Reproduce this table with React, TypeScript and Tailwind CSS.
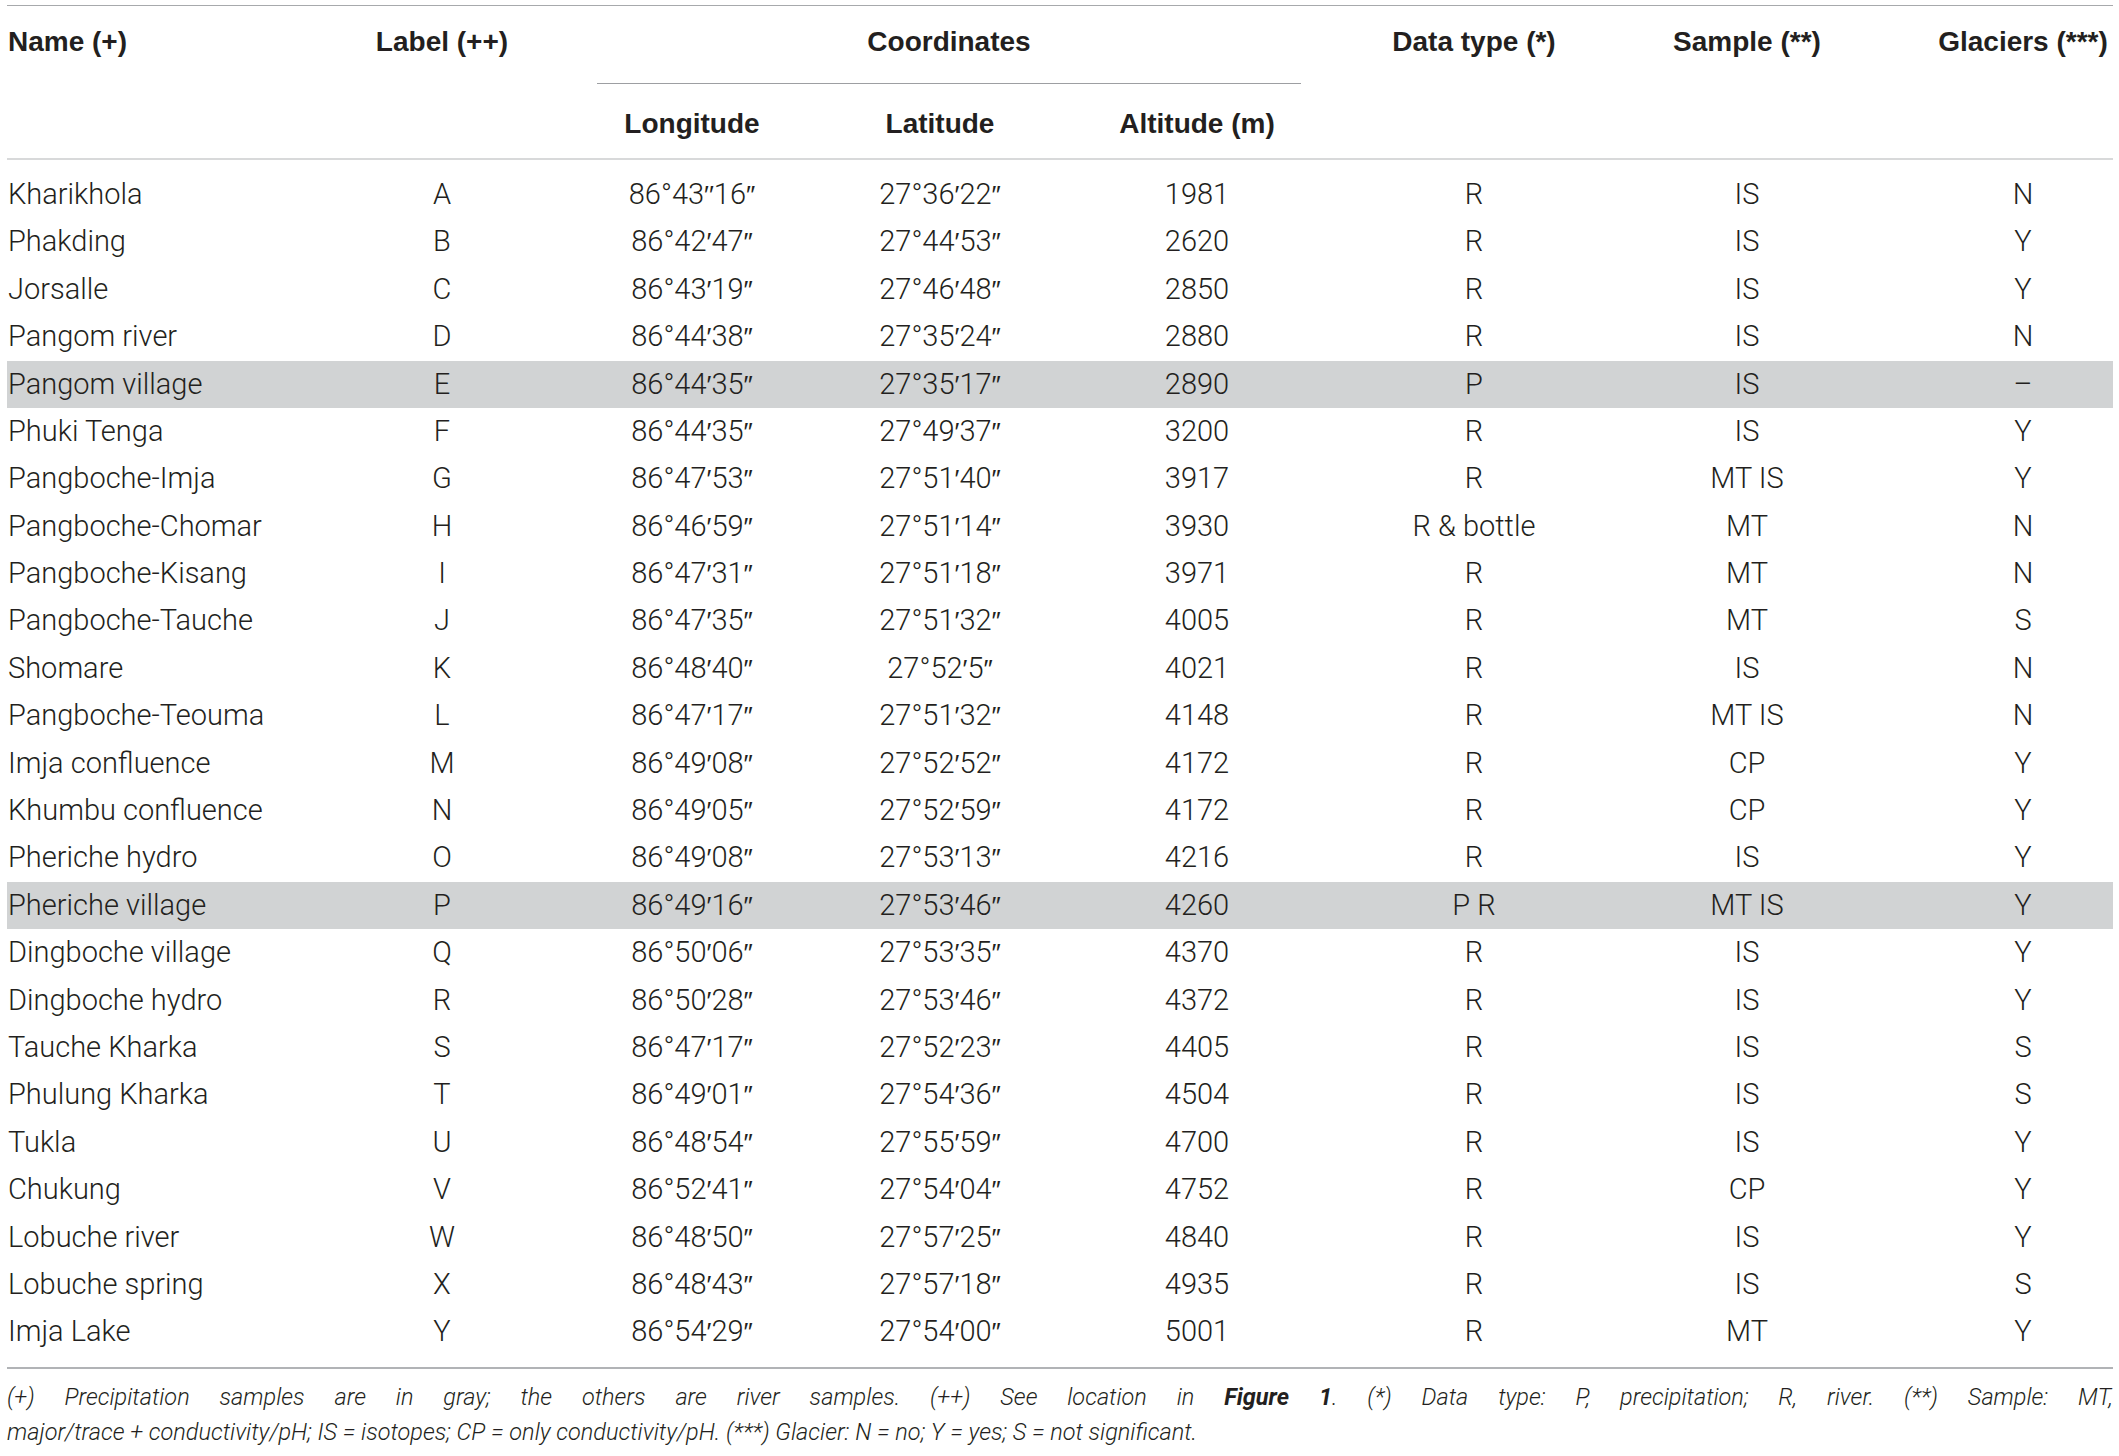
const rows: string[][] = [
  ["Kharikhola", "A", "86°43′′16″", "27°36′22″", "1981", "R", "IS", "N"],
  ["Phakding", "B", "86°42′47″", "27°44′53″", "2620", "R", "IS", "Y"],
  ["Jorsalle", "C", "86°43′19″", "27°46′48″", "2850", "R", "IS", "Y"],
  ["Pangom river", "D", "86°44′38″", "27°35′24″", "2880", "R", "IS", "N"],
  ["Pangom village", "E", "86°44′35″", "27°35′17″", "2890", "P", "IS", "–"],
  ["Phuki Tenga", "F", "86°44′35″", "27°49′37″", "3200", "R", "IS", "Y"],
  ["Pangboche-Imja", "G", "86°47′53″", "27°51′40″", "3917", "R", "MT IS", "Y"],
  ["Pangboche-Chomar", "H", "86°46′59″", "27°51′14″", "3930", "R & bottle", "MT", "N"],
  ["Pangboche-Kisang", "I", "86°47′31″", "27°51′18″", "3971", "R", "MT", "N"],
  ["Pangboche-Tauche", "J", "86°47′35″", "27°51′32″", "4005", "R", "MT", "S"],
  ["Shomare", "K", "86°48′40″", "27°52′5″", "4021", "R", "IS", "N"],
  ["Pangboche-Teouma", "L", "86°47′17″", "27°51′32″", "4148", "R", "MT IS", "N"],
  ["Imja confluence", "M", "86°49′08″", "27°52′52″", "4172", "R", "CP", "Y"],
  ["Khumbu confluence", "N", "86°49′05″", "27°52′59″", "4172", "R", "CP", "Y"],
  ["Pheriche hydro", "O", "86°49′08″", "27°53′13″", "4216", "R", "IS", "Y"],
  ["Pheriche village", "P", "86°49′16″", "27°53′46″", "4260", "P R", "MT IS", "Y"],
  ["Dingboche village", "Q", "86°50′06″", "27°53′35″", "4370", "R", "IS", "Y"],
  ["Dingboche hydro", "R", "86°50′28″", "27°53′46″", "4372", "R", "IS", "Y"],
  ["Tauche Kharka", "S", "86°47′17″", "27°52′23″", "4405", "R", "IS", "S"],
  ["Phulung Kharka", "T", "86°49′01″", "27°54′36″", "4504", "R", "IS", "S"],
  ["Tukla", "U", "86°48′54″", "27°55′59″", "4700", "R", "IS", "Y"],
  ["Chukung", "V", "86°52′41″", "27°54′04″", "4752", "R", "CP", "Y"],
  ["Lobuche river", "W", "86°48′50″", "27°57′25″", "4840", "R", "IS", "Y"],
  ["Lobuche spring", "X", "86°48′43″", "27°57′18″", "4935", "R", "IS", "S"],
  ["Imja Lake", "Y", "86°54′29″", "27°54′00″", "5001", "R", "MT", "Y"],
];

// precipitation samples get the gray band
const precip = new Set(["Pangom village", "Pheriche village"]);

const cols = "grid grid-cols-[273px_324px_176px_320px_194px_360px_186px_273px]";

// roboto draws primes straight; borrow slanted ones
function Coord({ v }: { v: string }) {
  return (
    <>
      {v.split(/([′″])/).map((p, i) =>
        p === "′" || p === "″" ? (
          <span key={i} className="font-['Liberation_Sans','DejaVu_Sans',sans-serif] font-normal text-[26px]">
            {p}
          </span>
        ) : (
          <span key={i}>{p}</span>
        )
      )}
    </>
  );
}

export default function App() {
  return (
    <div className="min-h-screen bg-white text-[#231f20] font-['Roboto',sans-serif]">
      <div className="ml-[7px] w-[2106px] pt-[5px]">
        {/* header */}
        <div className={`${cols} grid-rows-[78px_74px] border-t border-b-2 border-t-[#a7a9ac] border-b-[#d8d9da] font-['Liberation_Sans',Arial,sans-serif] font-bold text-[28px] leading-[40px]`}>
          <div className="pt-4 pl-px">Name (+)</div>
          <div className="pt-4 text-center">Label (++)</div>
          <div className="col-span-3 -mx-[7px] pt-4 text-center border-b border-[#9d9fa2]">Coordinates</div>
          <div className="pt-4 text-center">Data type (*)</div>
          <div className="pt-4 text-center">Sample (**)</div>
          <div className="pt-4 pl-[93px] text-center">Glaciers (***)</div>
          <div />
          <div />
          <div className="flex items-center justify-center pt-[6px]">Longitude</div>
          <div className="flex items-center justify-center pt-[6px]">Latitude</div>
          <div className="flex items-center justify-center pt-[6px]">Altitude (m)</div>
          <div />
          <div />
          <div />
        </div>

        {/* body */}
        <div className="pt-[11px] pb-[11px] border-b-2 border-[#b1b3b6] font-light text-[29px]">
          {rows.map((r) => (
            <div
              key={r[1]}
              className={`${cols} h-[47.4px] items-center ${precip.has(r[0]) ? "bg-[#d1d3d4]" : ""}`}
            >
              <div className="pl-px whitespace-nowrap">{r[0]}</div>
              <div className="text-center">{r[1]}</div>
              <div className="text-center"><Coord v={r[2]} /></div>
              <div className="text-center"><Coord v={r[3]} /></div>
              <div className="text-center">{r[4]}</div>
              <div className="text-center">{r[5]}</div>
              <div className="text-center">{r[6]}</div>
              <div className="pl-[93px] text-center">{r[7]}</div>
            </div>
          ))}
        </div>

        {/* footnote */}
        <div className="pt-[11px] italic font-light text-[23.5px] leading-[35px]">
          <p className="text-justify [text-align-last:justify]">
            (+) Precipitation samples are in gray; the others are river samples. (++) See location in{" "}
            <span className="font-bold">Figure 1</span>. (*) Data type: P, precipitation; R, river. (**) Sample: MT,
          </p>
          <p>major/trace + conductivity/pH; IS = isotopes; CP = only conductivity/pH. (***) Glacier: N = no; Y = yes; S = not significant.</p>
        </div>
      </div>
    </div>
  );
}
